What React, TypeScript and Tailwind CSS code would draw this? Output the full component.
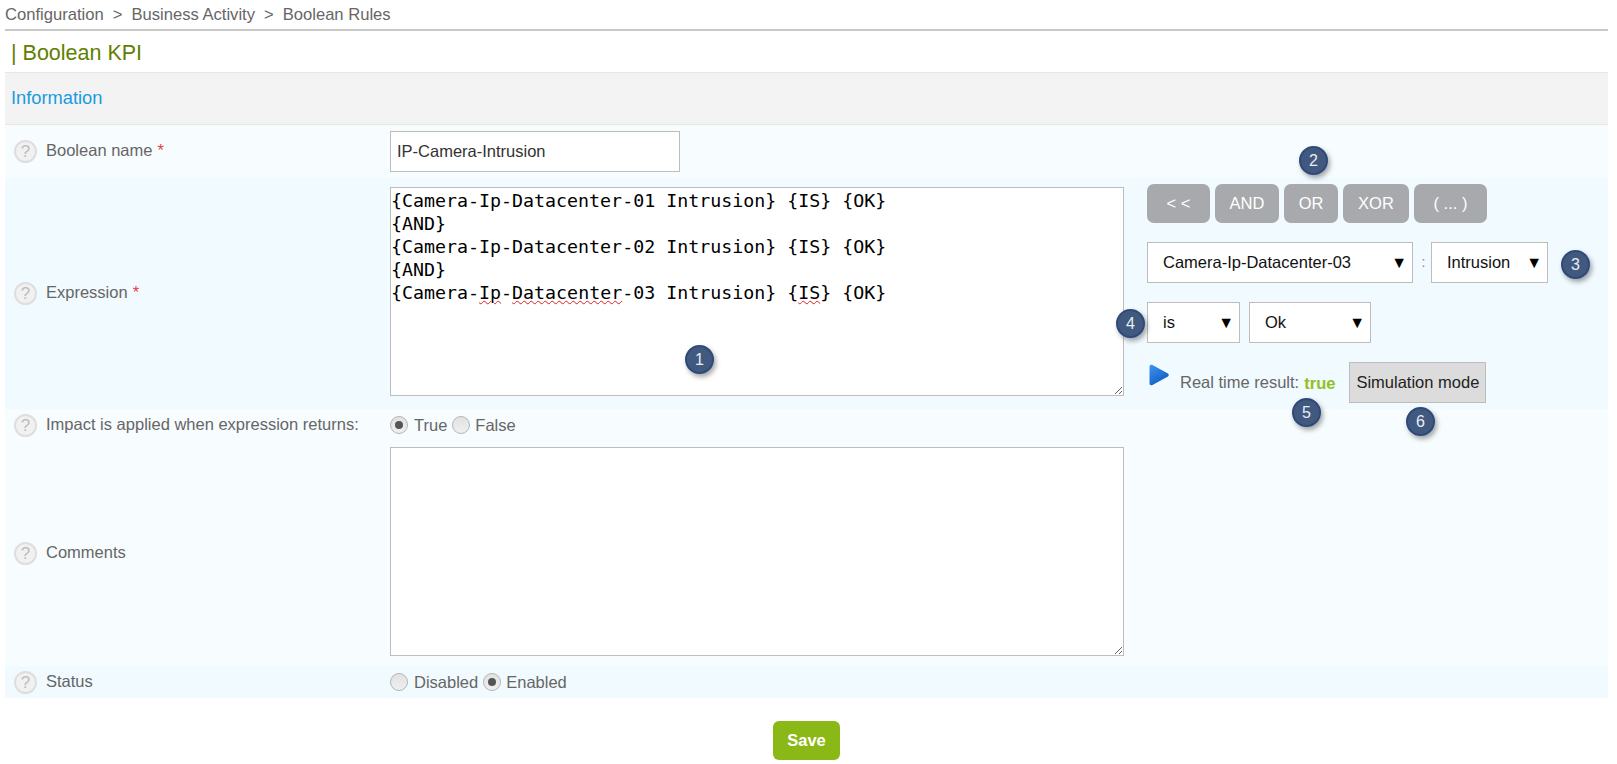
const sans = 'font-["Liberation_Sans",Arial,sans-serif]';
const squiggle = 'underline decoration-[#e02020] decoration-wavy decoration-1';

function Help() {
  return (
    <span className="flex h-[23px] w-[23px] shrink-0 items-center justify-center rounded-full border-2 border-[#dedede] bg-[#f1f1f1] text-[17px] leading-none text-[#bcbcbc]">
      ?
    </span>
  );
}

function Label({ text, required }: { text: string; required?: boolean }) {
  return (
    <div className="flex w-[385px] shrink-0 items-center gap-[9px] pl-[9px] text-[16.5px] text-[#666666]">
      <Help />
      <span className="-mt-[2px]">
        {text}
        {required && <span className="ml-[5px] text-[#e83e3e]">*</span>}
      </span>
    </div>
  );
}

function Select({ value, className }: { value: string; className: string }) {
  return (
    <div className={`flex h-[41px] items-center justify-between border border-[#bdbdbd] bg-white pl-[15px] pr-[5px] text-[16.5px] text-[#111111] ${className}`}>
      <span>{value}</span>
      <span className="text-[16px] leading-none text-black">▼</span>
    </div>
  );
}

function Radio({ checked }: { checked?: boolean }) {
  return (
    <span className="flex h-[18px] w-[18px] items-center justify-center rounded-full border border-[#b5b5b5] bg-gradient-to-b from-[#e2e2e2] to-[#efefef]">
      {checked && <span className="h-2 w-2 rounded-full bg-[#555555]" />}
    </span>
  );
}

function Badge({ n, className }: { n: number; className: string }) {
  return (
    <span className={`absolute flex h-[29px] w-[29px] items-center justify-center rounded-full border-2 border-[#2f4a78] bg-[#42597f] text-[16px] text-[#e8edf5] shadow-[2px_3px_5px_rgba(0,0,0,0.35)] ${className}`}>
      {n}
    </span>
  );
}

const opButton = 'flex h-[39px] items-center justify-center rounded-[7px] bg-[#a7a9ac] text-[16.5px] text-white';

export default function App() {
  return (
    <div className={`relative h-[764px] w-[1617px] overflow-hidden bg-white pl-[5px] pr-[9px] ${sans}`}>
      <div className="flex h-[31px] items-center border-b-2 border-[#c8c8c8] pt-[1px] text-[16.6px] text-[#666666]">
        <span>Configuration</span>
        <span className="mx-[9px]">&gt;</span>
        <span>Business Activity</span>
        <span className="mx-[9px]">&gt;</span>
        <span>Boolean Rules</span>
      </div>

      <div className="flex h-[42px] items-center border-b border-[#e6e6e6] pl-[6px] pt-[3px] text-[21.5px] text-[#5f8000]">
        | Boolean KPI
      </div>

      <div className="flex h-[52px] items-center border-b border-[#e6e6e6] bg-[#f3f3f3] pb-[1px] pl-[6px] text-[18.3px] text-[#1b9ae0]">
        Information
      </div>

      <div className="flex h-[53px] bg-[#f7fcff]">
        <Label text="Boolean name" required />
        <div className="pt-[6px]">
          <div className="flex h-[41px] w-[290px] items-center border border-[#bdbdbd] bg-white pl-[6px] text-[16.5px] text-[#333333]">
            IP-Camera-Intrusion
          </div>
        </div>
      </div>

      <div className="flex h-[231px] bg-[#f0faff]">
        <Label text="Expression" required />
        <div className="pt-[9px]">
          <div className="h-[209px] w-[734px] resize overflow-auto whitespace-pre border border-[#bdbdbd] bg-white pt-[1px] font-['DejaVu_Sans_Mono',monospace] text-[18.3px] leading-[23px] text-black">
            <div>{'{Camera-Ip-Datacenter-01 Intrusion} {IS} {OK}'}</div>
            <div>{'{AND}'}</div>
            <div>{'{Camera-Ip-Datacenter-02 Intrusion} {IS} {OK}'}</div>
            <div>{'{AND}'}</div>
            <div>
              {'{Camera-'}
              <span className={squiggle}>Ip</span>
              -
              <span className={squiggle}>Datacenter</span>
              {'-03 Intrusion} {'}
              <span className={squiggle}>IS</span>
              {'} {OK}'}
            </div>
          </div>
        </div>
        <div className="flex flex-col pl-[23px] pt-[6px]">
          <div className="flex">
            <div className={`${opButton} w-[63px]`}>&lt; &lt;</div>
            <div className={`${opButton} ml-[5px] w-[64px]`}>AND</div>
            <div className={`${opButton} ml-[5px] w-[54px]`}>OR</div>
            <div className={`${opButton} ml-[5px] w-[66px]`}>XOR</div>
            <div className={`${opButton} ml-[5px] w-[73px]`}>( ... )</div>
          </div>
          <div className="mt-[19px] flex items-center">
            <Select value="Camera-Ip-Datacenter-03" className="w-[266px]" />
            <span className="w-[18px] pl-[3px] text-center text-[14px] text-[#888888]">:</span>
            <Select value="Intrusion" className="w-[117px]" />
          </div>
          <div className="mt-[19px] flex gap-[9px]">
            <Select value="is" className="w-[93px]" />
            <Select value="Ok" className="w-[122px]" />
          </div>
          <div className="mt-[19px] flex items-center">
            <svg viewBox="0 0 20 22" className="-mt-[15px] ml-[2px] h-[22px] w-[20px]">
              <defs>
                <linearGradient id="play" x1="0" y1="0" x2="0.6" y2="1">
                  <stop offset="0" stopColor="#3f97ec" />
                  <stop offset="1" stopColor="#0f5cc4" />
                </linearGradient>
              </defs>
              <path d="M0.5 3 Q0.5 0 3 .8 L19 9.6 Q20.5 11 19 12.4 L3 21.2 Q0.5 22 0.5 19Z" fill="url(#play)" />
            </svg>
            <span className="ml-[11px] text-[16.5px] text-[#666666]">Real time result:</span>
            <span className="ml-[5px] mt-[2px] text-[16.5px] font-bold text-[#92c020]">true</span>
            <div className="ml-[14px] flex h-[41px] w-[137px] items-center justify-center border border-[#bdbdbd] bg-[#dcdcdc] text-[16.5px] text-[#222222]">
              Simulation mode
            </div>
          </div>
        </div>
      </div>

      <div className="flex h-[32px] bg-[#f7fcff]">
        <Label text="Impact is applied when expression returns:" />
        <div className="flex items-center text-[16.5px] text-[#666666]">
          <Radio checked />
          <span className="ml-[6px]">True</span>
          <span className="ml-[5px]"><Radio /></span>
          <span className="ml-[5px]">False</span>
        </div>
      </div>

      <div className="flex h-[225px] bg-[#f7fcff]">
        <Label text="Comments" />
        <div className="pt-[6px]">
          <div className="h-[209px] w-[734px] resize overflow-auto border border-[#bdbdbd] bg-white" />
        </div>
      </div>

      <div className="flex h-[32px] bg-[#f0faff]">
        <Label text="Status" />
        <div className="flex items-center text-[16.5px] text-[#666666]">
          <Radio />
          <span className="ml-[6px]">Disabled</span>
          <span className="ml-[5px]"><Radio checked /></span>
          <span className="ml-[5px]">Enabled</span>
        </div>
      </div>

      <div className="flex justify-center pt-[23px]">
        <div className="flex h-[39px] w-[67px] items-center justify-center rounded-[6px] bg-[#8ab816] text-[16.5px] font-bold text-white">
          Save
        </div>
      </div>

      <Badge n={1} className="left-[685px] top-[345px]" />
      <Badge n={2} className="left-[1299px] top-[146px]" />
      <Badge n={3} className="left-[1561px] top-[250px]" />
      <Badge n={4} className="left-[1116px] top-[309px]" />
      <Badge n={5} className="left-[1292px] top-[398px]" />
      <Badge n={6} className="left-[1406px] top-[407px]" />
    </div>
  );
}
